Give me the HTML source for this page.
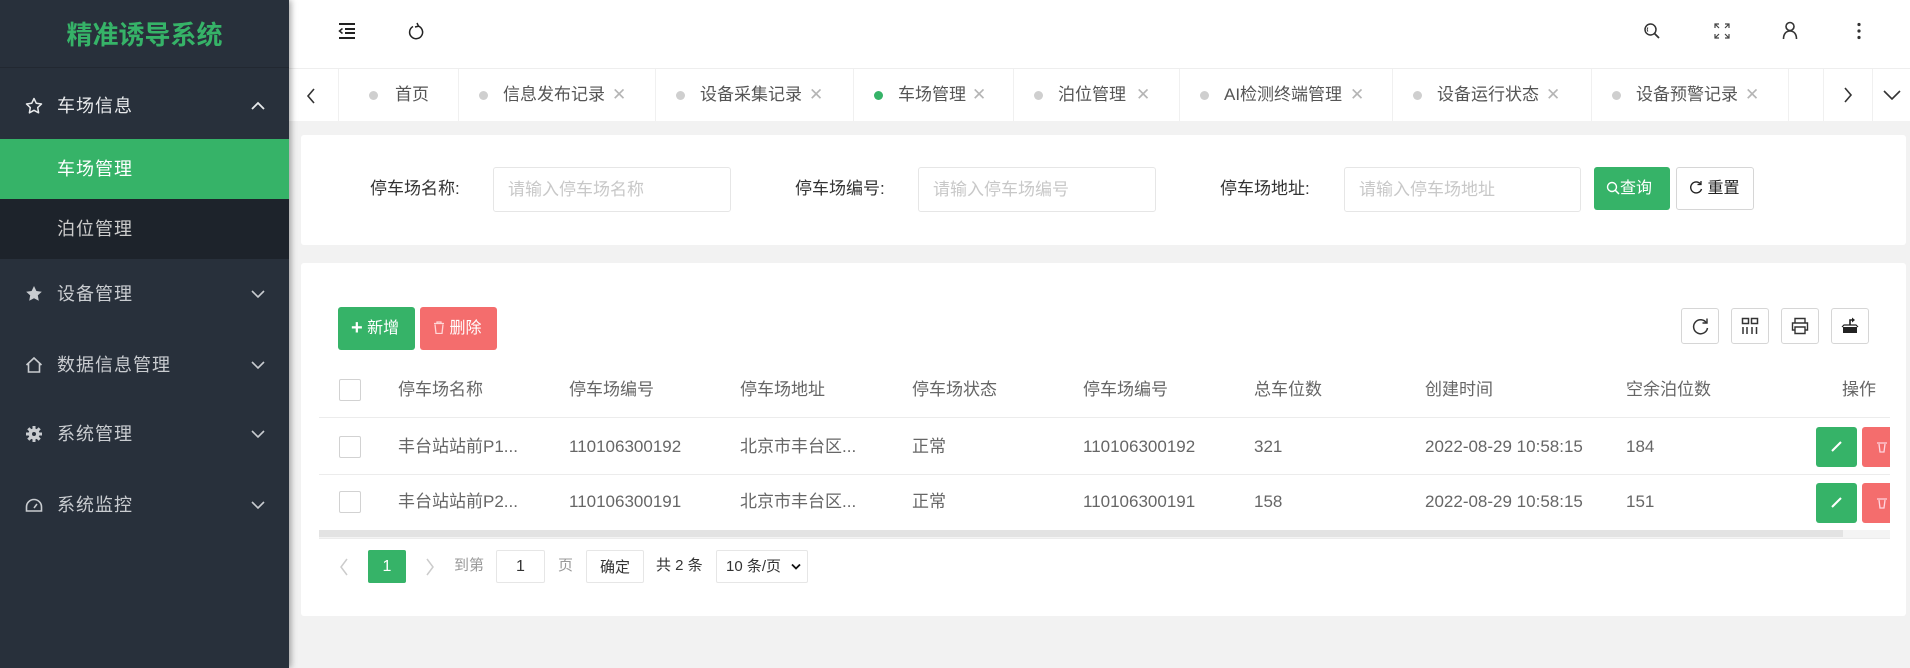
<!DOCTYPE html>
<html><head><meta charset="utf-8"><style>
*{margin:0;padding:0;box-sizing:border-box}
body{width:1910px;height:668px;overflow:hidden;background:#f2f2f2;font-family:"Liberation Sans","Noto Sans CJK SC",sans-serif;position:relative;color:#606266}
.a{position:absolute}
#side{left:0;top:0;width:289px;height:668px;background:#28303b;box-shadow:2px 0 6px rgba(0,0,0,.35);z-index:2}
.logo{left:0;top:0;width:289px;height:68px;border-bottom:1px solid #222831;color:#36b368;font-size:26px;font-weight:bold;text-align:center;line-height:70px;letter-spacing:0px}
.mi{left:0;width:289px;height:60px;color:#e8eaec;font-size:18px;letter-spacing:1px}
.mi span.t{position:absolute;left:57px;top:50%;transform:translateY(-50%);line-height:22px}
.mi .ic{position:absolute;left:24px;top:50%;transform:translateY(-50%);width:20px;height:20px}
.mi .ch{position:absolute;left:250px;top:50%;transform:translateY(-50%);width:16px;height:16px}
.sub{left:0;width:289px;height:60px;font-size:18px;letter-spacing:1px}
.sub span{position:absolute;left:57px;top:50%;transform:translateY(-50%);line-height:22px}
#hdr{left:289px;top:0;width:1621px;height:69px;background:#fff;border-bottom:1px solid #eee}
#tabs{left:289px;top:69px;width:1621px;height:52px;background:#fff}
.tab{top:0;height:52px;border-left:1px solid #f0f0f0;font-size:17px;color:#555;line-height:52px;white-space:nowrap}
.tab .d{position:absolute;top:22px;width:9px;height:9px;border-radius:50%;background:#cfcfcf}
.tab .x{position:absolute;top:0;color:#b5b5b5;font-size:17px}
.card{background:#fff;border-radius:3px}
.lbl{font-size:17px;color:#333;top:179px;line-height:20px}
.inp{top:167px;height:45px;border:1px solid #e6e6e6;border-radius:3px;font-size:17px;color:#c8c8c8;line-height:43px;padding-left:14px}
.th{top:380px;font-size:17px;color:#666;line-height:20px}
.td{font-size:17px;color:#666;line-height:20px}
.cb{width:22px;height:22px;border:1px solid #d2d2d2;border-radius:2px;background:#fff}
.tb{width:38px;height:36px;border:1px solid #d6d6d6;border-radius:3px;top:308px;background:#fff}
.hl{height:1px;background:#ececec;left:319px;width:1571px}
</style></head><body>
<div id="side" class="a">
 <div class="a logo">精准诱导系统</div>
 <div class="a mi" style="top:76px">
  <svg class="ic" viewBox="0 0 20 20"><path d="M10 2.5l2.3 4.8 5.2.7-3.8 3.6.9 5.2L10 14.3l-4.6 2.5.9-5.2L2.5 8l5.2-.7z" fill="none" stroke="#e8eaec" stroke-width="1.5" stroke-linejoin="round"/></svg>
  <span class="t">车场信息</span>
  <svg class="ch" viewBox="0 0 16 16"><path d="M2 11l6-6 6 6" fill="none" stroke="#e8eaec" stroke-width="1.8"/></svg>
 </div>
 <div class="a sub" style="top:139px;background:#36b368;color:#fff"><span>车场管理</span></div>
 <div class="a sub" style="top:199px;background:#1d232b;color:#ccc"><span>泊位管理</span></div>
 <div class="a mi" style="top:264px;color:#c9ccd0">
  <svg class="ic" viewBox="0 0 20 20"><path d="M10 2l2.4 5 5.4.7-4 3.7 1 5.4L10 14.2l-4.8 2.6 1-5.4-4-3.7 5.4-.7z" fill="#c9ccd0"/></svg>
  <span class="t">设备管理</span>
  <svg class="ch" viewBox="0 0 16 16"><path d="M2 5l6 6 6-6" fill="none" stroke="#c9ccd0" stroke-width="1.6"/></svg>
 </div>
 <div class="a mi" style="top:335px;color:#c9ccd0">
  <svg class="ic" viewBox="0 0 20 20"><path d="M2.5 10L10 3l7.5 7M4.5 8.5V17h11V8.5" fill="none" stroke="#c9ccd0" stroke-width="1.6"/></svg>
  <span class="t">数据信息管理</span>
  <svg class="ch" viewBox="0 0 16 16"><path d="M2 5l6 6 6-6" fill="none" stroke="#c9ccd0" stroke-width="1.6"/></svg>
 </div>
 <div class="a mi" style="top:404px;color:#c9ccd0">
  <svg class="ic" viewBox="0 0 20 20"><circle cx="10" cy="10" r="5.5" fill="#c9ccd0"/><path d="M10 2v16M2 10h16M4.3 4.3l11.4 11.4M15.7 4.3L4.3 15.7" stroke="#c9ccd0" stroke-width="3"/><circle cx="10" cy="10" r="2" fill="#28303b"/></svg>
  <span class="t">系统管理</span>
  <svg class="ch" viewBox="0 0 16 16"><path d="M2 5l6 6 6-6" fill="none" stroke="#c9ccd0" stroke-width="1.6"/></svg>
 </div>
 <div class="a mi" style="top:475px;color:#c9ccd0">
  <svg class="ic" viewBox="0 0 20 20"><path d="M2.5 16V12a7.5 7.5 0 0 1 15 0v4z" fill="none" stroke="#c9ccd0" stroke-width="1.6"/><path d="M10 13l3-4" stroke="#c9ccd0" stroke-width="1.6"/></svg>
  <span class="t">系统监控</span>
  <svg class="ch" viewBox="0 0 16 16"><path d="M2 5l6 6 6-6" fill="none" stroke="#c9ccd0" stroke-width="1.6"/></svg>
 </div>
</div>

<div id="hdr" class="a">
 <svg class="a" style="left:49px;top:22px" width="18" height="18" viewBox="0 0 18 18"><path d="M1 2h16M7 7h10M7 11h10M1 16h16" stroke="#222" stroke-width="2"/><path d="M4.5 6.5L1.5 9l3 2.5" fill="none" stroke="#222" stroke-width="1.5"/></svg>
 <svg class="a" style="left:118px;top:22px" width="18" height="20" viewBox="0 0 18 20"><path d="M6 4.5A6.5 6.5 0 1 0 11 4" fill="none" stroke="#222" stroke-width="1.5"/><path d="M10 1l1.5 3.2L8 5" fill="none" stroke="#222" stroke-width="1.5"/></svg>
 <svg class="a" style="left:1354px;top:22px" width="18" height="18" viewBox="0 0 18 18"><circle cx="7.5" cy="7.5" r="5.5" fill="none" stroke="#333" stroke-width="1.5"/><path d="M11.5 11.5l4.5 4.5" stroke="#333" stroke-width="1.8"/><path d="M5 5.5a3 3 0 0 0 0 4" fill="none" stroke="#333" stroke-width="1"/></svg>
 <svg class="a" style="left:1425px;top:23px" width="16" height="16" viewBox="0 0 16 16"><path d="M1 5V1h4M11 1h4v4M15 11v4h-4M5 15H1v-4M1 1l4 4M15 1l-4 4M15 15l-4-4M1 15l4-4" fill="none" stroke="#444" stroke-width="1.2"/></svg>
 <svg class="a" style="left:1493px;top:21px" width="16" height="19" viewBox="0 0 16 19"><circle cx="8" cy="5.5" r="4" fill="none" stroke="#333" stroke-width="1.6"/><path d="M1.5 18c0-5 2.5-8 6.5-8s6.5 3 6.5 8" fill="none" stroke="#333" stroke-width="1.6"/></svg>
 <svg class="a" style="left:1567px;top:22px" width="6" height="18" viewBox="0 0 6 18"><circle cx="3" cy="2.5" r="1.6" fill="#333"/><circle cx="3" cy="9" r="1.6" fill="#333"/><circle cx="3" cy="15.5" r="1.6" fill="#333"/></svg>
</div>

<div id="tabs" class="a">
 <svg class="a" style="left:17px;top:19px" width="10" height="16" viewBox="0 0 10 16"><path d="M8 1L2 8l6 7" fill="none" stroke="#333" stroke-width="1.6"/></svg>
 <div class="a tab" style="left:49px;width:120px"><i class="d" style="left:30px"></i><span style="position:absolute;left:56px">首页</span></div>
 <div class="a tab" style="left:169px;width:197px"><i class="d" style="left:20px"></i><span style="position:absolute;left:44px">信息发布记录</span><span class="x" style="left:153px">✕</span></div>
 <div class="a tab" style="left:366px;width:198px"><i class="d" style="left:20px"></i><span style="position:absolute;left:44px">设备采集记录</span><span class="x" style="left:153px">✕</span></div>
 <div class="a tab" style="left:564px;width:160px"><i class="d" style="left:20px;background:#36b368"></i><span style="position:absolute;left:44px">车场管理</span><span class="x" style="left:118px">✕</span></div>
 <div class="a tab" style="left:724px;width:166px"><i class="d" style="left:20px"></i><span style="position:absolute;left:44px">泊位管理</span><span class="x" style="left:122px">✕</span></div>
 <div class="a tab" style="left:890px;width:213px"><i class="d" style="left:20px"></i><span style="position:absolute;left:44px">AI检测终端管理</span><span class="x" style="left:170px">✕</span></div>
 <div class="a tab" style="left:1103px;width:199px"><i class="d" style="left:20px"></i><span style="position:absolute;left:44px">设备运行状态</span><span class="x" style="left:153px">✕</span></div>
 <div class="a tab" style="left:1302px;width:197px"><i class="d" style="left:20px"></i><span style="position:absolute;left:44px">设备预警记录</span><span class="x" style="left:153px">✕</span></div>
 <div class="a tab" style="left:1499px;width:35px"></div>
 <div class="a tab" style="left:1534px;width:49px"><svg style="position:absolute;left:19px;top:18px" width="10" height="16" viewBox="0 0 10 16"><path d="M2 1l6 7-6 7" fill="none" stroke="#333" stroke-width="1.6"/></svg></div>
 <div class="a tab" style="left:1583px;width:38px"><svg style="position:absolute;left:10px;top:21px" width="18" height="10" viewBox="0 0 18 10"><path d="M1 1l8 8 8-8" fill="none" stroke="#333" stroke-width="1.6"/></svg></div>
</div>

<div class="a card" style="left:301px;top:135px;width:1605px;height:110px"></div>
<div class="a lbl" style="left:370px">停车场名称:</div>
<div class="a inp" style="left:493px;width:238px">请输入停车场名称</div>
<div class="a lbl" style="left:795px">停车场编号:</div>
<div class="a inp" style="left:918px;width:238px">请输入停车场编号</div>
<div class="a lbl" style="left:1220px">停车场地址:</div>
<div class="a inp" style="left:1344px;width:237px">请输入停车场地址</div>
<div class="a" style="left:1594px;top:167px;width:76px;height:43px;background:#36b368;border-radius:3px;color:#fff;font-size:16px;line-height:43px;padding-left:12px">
 <svg style="vertical-align:-2px" width="14" height="14" viewBox="0 0 14 14"><circle cx="6" cy="6" r="4.5" fill="none" stroke="#fff" stroke-width="1.4"/><path d="M9.3 9.3L13 13" stroke="#fff" stroke-width="1.5"/></svg>查询</div>
<div class="a" style="left:1676px;top:167px;width:78px;height:43px;border:1px solid #d6d6d6;border-radius:3px;color:#222;font-size:16px;line-height:41px;padding-left:12px;background:#fff">
 <svg style="vertical-align:-2px" width="14" height="15" viewBox="0 0 14 15"><path d="M11.5 4A5.5 5.5 0 1 0 12.5 9" fill="none" stroke="#222" stroke-width="1.4"/><path d="M12 1v3.5H8.5" fill="none" stroke="#222" stroke-width="1.3"/></svg> 重置</div>

<div class="a card" style="left:301px;top:263px;width:1605px;height:353px;overflow:hidden">
</div>
<div class="a" style="left:338px;top:307px;width:77px;height:43px;background:#36b368;border-radius:3px;color:#fff;font-size:16px;line-height:43px;padding-left:13px"><b style="font-size:20px;vertical-align:-1px">+</b> 新增</div>
<div class="a" style="left:420px;top:307px;width:77px;height:43px;background:#f46d6d;border-radius:3px;color:#fff;font-size:16px;line-height:43px;padding-left:13px">
 <svg style="vertical-align:-1px" width="12" height="13" viewBox="0 0 12 13"><path d="M1 2.5h10M4 2.5V1h4v1.5M2 3.5l1 9h6l1-9" fill="none" stroke="#ffd6d6" stroke-width="1.3"/></svg> 删除</div>
<div class="a tb" style="left:1681px"><svg style="position:absolute;left:9px;top:8px" width="19" height="19" viewBox="0 0 19 19"><path d="M15.5 6A7 7 0 1 0 16.5 11" fill="none" stroke="#333" stroke-width="1.5"/><path d="M16 1.5V6h-4.5" fill="none" stroke="#333" stroke-width="1.4"/></svg></div>
<div class="a tb" style="left:1731px"><svg style="position:absolute;left:9px;top:8px" width="18" height="18" viewBox="0 0 18 18"><path d="M1.5 1.5h6v5h-6zM10.5 1.5h6v5h-6zM2 10v7M6 10v7M11 10v7M15.5 10v7" fill="none" stroke="#333" stroke-width="1.5"/></svg></div>
<div class="a tb" style="left:1781px"><svg style="position:absolute;left:9px;top:8px" width="18" height="18" viewBox="0 0 18 18"><path d="M4 6V1.5h10V6M4 13H1.5V6h15v7H14M4 10h10v6.5H4z" fill="none" stroke="#333" stroke-width="1.4"/></svg></div>
<div class="a tb" style="left:1831px"><svg style="position:absolute;left:9px;top:8px" width="18" height="18" viewBox="0 0 18 18"><path d="M2 10h14v6H2z" fill="#222"/><path d="M1 10l2-2h12l2 2" fill="none" stroke="#222" stroke-width="1.2"/><path d="M9 8V3h3" fill="none" stroke="#222" stroke-width="1.6"/><path d="M11 0.5L14 3l-3 2.5z" fill="#222"/></svg></div>

<div class="a cb" style="left:339px;top:379px"></div>
<div class="a th" style="left:398px">停车场名称</div>
<div class="a th" style="left:569px">停车场编号</div>
<div class="a th" style="left:740px">停车场地址</div>
<div class="a th" style="left:912px">停车场状态</div>
<div class="a th" style="left:1083px">停车场编号</div>
<div class="a th" style="left:1254px">总车位数</div>
<div class="a th" style="left:1425px">创建时间</div>
<div class="a th" style="left:1626px">空余泊位数</div>
<div class="a th" style="left:1842px">操作</div>
<div class="a hl" style="top:417px"></div>

<div class="a cb" style="left:339px;top:436px"></div>
<div class="a td" style="left:398px;top:437px">丰台站站前P1...</div>
<div class="a td" style="left:569px;top:437px">110106300192</div>
<div class="a td" style="left:740px;top:437px">北京市丰台区...</div>
<div class="a td" style="left:912px;top:437px">正常</div>
<div class="a td" style="left:1083px;top:437px">110106300192</div>
<div class="a td" style="left:1254px;top:437px">321</div>
<div class="a td" style="left:1425px;top:437px">2022-08-29 10:58:15</div>
<div class="a td" style="left:1626px;top:437px">184</div>
<div class="a hl" style="top:474px"></div>

<div class="a cb" style="left:339px;top:491px"></div>
<div class="a td" style="left:398px;top:492px">丰台站站前P2...</div>
<div class="a td" style="left:569px;top:492px">110106300191</div>
<div class="a td" style="left:740px;top:492px">北京市丰台区...</div>
<div class="a td" style="left:912px;top:492px">正常</div>
<div class="a td" style="left:1083px;top:492px">110106300191</div>
<div class="a td" style="left:1254px;top:492px">158</div>
<div class="a td" style="left:1425px;top:492px">2022-08-29 10:58:15</div>
<div class="a td" style="left:1626px;top:492px">151</div>

<div class="a" style="left:1816px;top:427px;width:41px;height:40px;background:#36b368;border-radius:3px"><svg style="position:absolute;left:14px;top:13px" width="13" height="13" viewBox="0 0 13 13"><path d="M2 11L11 2" stroke="#fff" stroke-width="2"/></svg></div>
<div class="a" style="left:1862px;top:427px;width:28px;height:40px;background:#f46d6d;border-radius:3px 0 0 3px"><svg style="position:absolute;left:14px;top:14px" width="12" height="12" viewBox="0 0 12 12"><path d="M1 2h10M3 3l1 8h4l1-8" fill="none" stroke="#ffd6e0" stroke-width="1.3"/></svg></div>
<div class="a" style="left:1816px;top:483px;width:41px;height:40px;background:#36b368;border-radius:3px"><svg style="position:absolute;left:14px;top:13px" width="13" height="13" viewBox="0 0 13 13"><path d="M2 11L11 2" stroke="#fff" stroke-width="2"/></svg></div>
<div class="a" style="left:1862px;top:483px;width:28px;height:40px;background:#f46d6d;border-radius:3px 0 0 3px"><svg style="position:absolute;left:14px;top:14px" width="12" height="12" viewBox="0 0 12 12"><path d="M1 2h10M3 3l1 8h4l1-8" fill="none" stroke="#ffd6e0" stroke-width="1.3"/></svg></div>

<div class="a" style="left:319px;top:530px;width:1571px;height:8px;background:#f4f4f4"></div>
<div class="a" style="left:319px;top:530px;width:1524px;height:7px;background:#e3e3e3"></div>
<div class="a hl" style="top:538px"></div>

<svg class="a" style="left:339px;top:558px" width="10" height="18" viewBox="0 0 10 18"><path d="M8 1L2 9l6 8" fill="none" stroke="#ccc" stroke-width="1.5"/></svg>
<div class="a" style="left:368px;top:550px;width:38px;height:33px;background:#36b368;border-radius:2px;color:#fff;font-size:16px;text-align:center;line-height:33px">1</div>
<svg class="a" style="left:425px;top:558px" width="10" height="18" viewBox="0 0 10 18"><path d="M2 1l6 8-6 8" fill="none" stroke="#ccc" stroke-width="1.5"/></svg>
<div class="a" style="left:454px;top:557px;font-size:15px;color:#999;line-height:18px">到第</div>
<div class="a" style="left:496px;top:550px;width:49px;height:33px;border:1px solid #e6e6e6;border-radius:2px;font-size:16px;color:#333;text-align:center;line-height:31px">1</div>
<div class="a" style="left:558px;top:557px;font-size:15px;color:#999;line-height:18px">页</div>
<div class="a" style="left:586px;top:550px;width:58px;height:33px;border:1px solid #e6e6e6;border-radius:2px;font-size:15px;color:#333;text-align:center;line-height:33px">确定</div>
<div class="a" style="left:656px;top:557px;font-size:15px;color:#333;line-height:18px">共 2 条</div>
<div class="a" style="left:716px;top:550px;width:92px;height:33px;border:1px solid #e6e6e6;border-radius:2px;font-size:15px;color:#333;line-height:31px;padding-left:9px">10 条/页<svg style="position:absolute;left:74px;top:12px" width="10" height="8" viewBox="0 0 10 8"><path d="M1 1.5l4 4 4-4" fill="none" stroke="#111" stroke-width="1.8"/></svg></div>
</body></html>
